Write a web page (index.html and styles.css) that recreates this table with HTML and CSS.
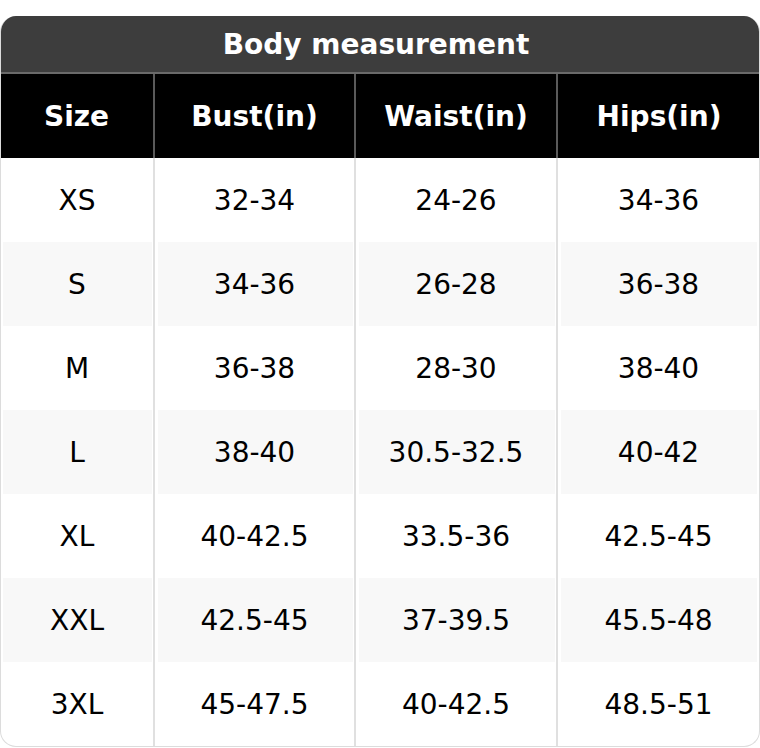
FILE: index.html
```html
<!DOCTYPE html>
<html>
<head>
<meta charset="utf-8">
<link rel="stylesheet" href="styles.css">
</head>
<body>
<div class="chart">
  <div class="title">Body measurement</div>
  <div class="grid">
    <div class="row head"><div class="c">Size</div><div class="c">Bust(in)</div><div class="c">Waist(in)</div><div class="c">Hips(in)</div></div>
    <div class="row"><div class="c">XS</div><div class="c">32-34</div><div class="c">24-26</div><div class="c">34-36</div></div>
    <div class="row alt"><div class="c">S</div><div class="c">34-36</div><div class="c">26-28</div><div class="c">36-38</div></div>
    <div class="row"><div class="c">M</div><div class="c">36-38</div><div class="c">28-30</div><div class="c">38-40</div></div>
    <div class="row alt"><div class="c">L</div><div class="c">38-40</div><div class="c">30.5-32.5</div><div class="c">40-42</div></div>
    <div class="row"><div class="c">XL</div><div class="c">40-42.5</div><div class="c">33.5-36</div><div class="c">42.5-45</div></div>
    <div class="row alt"><div class="c">XXL</div><div class="c">42.5-45</div><div class="c">37-39.5</div><div class="c">45.5-48</div></div>
    <div class="row"><div class="c">3XL</div><div class="c">45-47.5</div><div class="c">40-42.5</div><div class="c">48.5-51</div></div>
  </div>
</div>
</body>
</html>
```

FILE: styles.css
```css
html, body {
  margin: 0;
  padding: 0;
  background: #fff;
}
body {
  padding-top: 16px;
  font-family: "DejaVu Sans", Verdana, sans-serif;
}
.chart {
  width: 760px;
  box-sizing: border-box;
  border: 1px solid #dcdcdc;
  border-top: none;
  border-radius: 16px;
  overflow: hidden;
}
.title {
  height: 56px;
  background: #3d3d3d;
  color: #fff;
  font-weight: bold;
  font-size: 28px;
  display: flex;
  align-items: center;
  justify-content: center;
  border-bottom: 2px solid #6a6a6a;
  margin: 0 -1px;
  padding-right: 8px;
}
.row {
  display: grid;
  grid-template-columns: 154px 201px 202px 1fr;
  height: 84px;
}
.c {
  display: flex;
  align-items: center;
  justify-content: center;
  font-size: 28px;
  color: #000;
  border-right: 2px solid #e0e0e0;
  box-sizing: border-box;
}
.c:last-child {
  border-right: none;
}
.head {
  background: #000;
  margin: 0 -1px;
  grid-template-columns: 155px 201px 202px 1fr;
}
.head .c {
  color: #fff;
  font-weight: bold;
  border-right-color: #5a5a5a;
}
.alt .c {
  background: #f8f8f8;
  box-shadow: inset 3px 0 0 #fff, inset -1px 0 0 #fff;
}
.alt .c:first-child {
  box-shadow: inset 2px 0 0 #fff, inset -1px 0 0 #fff;
}
.alt .c:last-child {
  box-shadow: inset 3px 0 0 #fff, inset -2px 0 0 #fff;
}
```
